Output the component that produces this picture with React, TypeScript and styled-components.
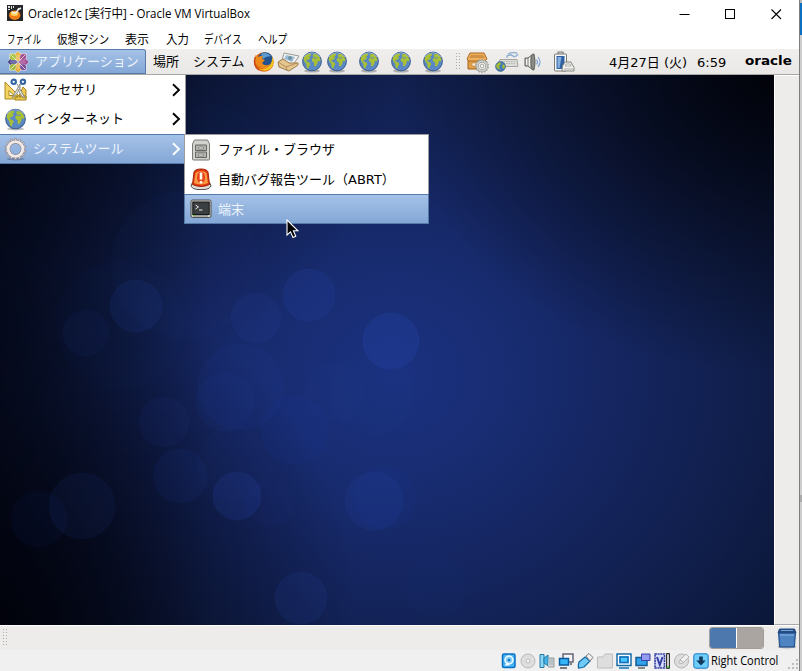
import React from "react";
import styled, { createGlobalStyle, css } from "styled-components";

const Global = createGlobalStyle`
  html, body { margin: 0; padding: 0; overflow: hidden; background: #fff; }
  * { box-sizing: border-box; }
`;

const UI_FONT = '"Open Sans", "Noto Sans CJK JP", sans-serif';
const GUEST_FONT = '"DejaVu Sans", "Noto Sans CJK JP", sans-serif';

const Screen = styled.div`
  width: 802px;
  height: 671px;
  display: flex;
  overflow: hidden;
  background: #e9e9e9;
`;
const Window = styled.div`
  width: 799px;
  height: 671px;
  display: flex;
  flex-direction: column;
  background: #f0f0f0;
`;
const Behind = styled.div`
  width: 3px;
  height: 671px;
  border-left: 1px solid #7d7d7d;
  background: linear-gradient(#b9b9b9 0 3px, #0b6fc2 3px 35px, #cdcdcd 35px 495px, #aaa 495px 502px, #cdcdcd 502px);
`;

/* Text of a known run width: the glyphs are condensed or widened to fill it */
const Label = styled.span<{ $size: number; $scale?: number; $w: number; $color?: string; $bold?: boolean; $y?: number }>`
  display: block;
  flex: none;
  width: ${(p) => p.$w}px;
  white-space: nowrap;
  font-size: ${(p) => p.$size}px;
  font-weight: ${(p) => (p.$bold ? 700 : 400)};
  color: ${(p) => p.$color || "#000"};
  line-height: 20px;
  transform: translateY(${(p) => p.$y || 0}px) scaleX(${(p) => p.$scale || 1});
  transform-origin: 0 50%;
`;

const TitleBar = styled.header`
  height: 28px;
  flex: none;
  background: #fff;
  display: flex;
  align-items: center;
  padding-left: 7px;
  font-family: ${UI_FONT};
  & > svg:first-child { margin-right: 5px; margin-top: -2px; flex: none; }
`;
const Controls = styled.div`
  display: flex;
  margin-left: auto;
`;
const Control = styled.button`
  width: 46px;
  height: 27px;
  padding: 0;
  border: 0;
  background: none;
  display: grid;
  place-items: center;
`;
const MenuBar = styled.nav`
  height: 21px;
  flex: none;
  background: #fff;
  display: flex;
  align-items: center;
  padding: 2px 0 0 7px;
  font-family: ${UI_FONT};
`;

const Panel = styled.div`
  height: 26px;
  flex: none;
  background: linear-gradient(#f0efee, #e9e8e6);
  border-bottom: 1px solid #a9a7a4;
  display: flex;
  align-items: center;
  font-family: ${GUEST_FONT};
`;
const highlight = css`
  background: linear-gradient(#a5c2e8, #84a7d6);
  border: 1px solid #5579a8;
`;
const AppsButton = styled.div`
  ${highlight}
  width: 146px;
  height: 25px;
  border-left: 0;
  border-radius: 0 3px 0 0;
  display: flex;
  align-items: center;
  padding-left: 7px;
  gap: 6px;
`;
const Spot = styled.div<{ $w: number }>`
  width: ${(p) => p.$w}px;
  flex: none;
  display: flex;
  align-items: center;
  height: 25px;
`;
const Grip = styled.div`
  width: 6px;
  height: 18px;
  flex: none;
  background-image: radial-gradient(circle at 0.5px 0.5px, #aaa 0.8px, transparent 0.9px);
  background-size: 3px 3px;
`;

const Guest = styled.main`
  height: 550px;
  flex: none;
  display: flex;
`;
const Desktop = styled.div`
  width: 774px;
  height: 550px;
  position: relative;
  overflow: hidden;
  background:
    radial-gradient(ellipse 360px 360px at 0% 100%, rgba(0, 0, 6, 0.8), rgba(0, 0, 10, 0) 100%),
    radial-gradient(ellipse 380px 300px at 100% 0%, rgba(0, 0, 4, 0.88), rgba(0, 0, 10, 0) 100%),
    radial-gradient(ellipse 400px 330px at 0% 0%, rgba(0, 0, 6, 0.55), rgba(0, 0, 10, 0) 100%),
    linear-gradient(90deg, rgba(0, 2, 12, 0.6), rgba(0, 2, 12, 0) 210px),
    radial-gradient(ellipse 530px 480px at 395px 300px, #1b3180 0%, #182d73 20%, #152662 40%, #11204f 62%, #0b1739 88%, #08112c 100%);
`;
const Wallpaper = styled.svg`
  display: block;
  width: 774px;
  height: 550px;
`;
const SideStrip = styled.div`
  width: 25px;
  background: #edecea;
  border-top: 1px solid #fff;
  border-left: 1px solid #fff;
  border-bottom: 1px solid #a8a8a8;
`;

const Menu = styled.div<{ $x: number; $y: number; $w: number }>`
  position: absolute;
  left: ${(p) => p.$x}px;
  top: ${(p) => p.$y}px;
  width: ${(p) => p.$w}px;
  background: #fff;
  border-right: 1px solid #9b9b9b;
  font-family: ${GUEST_FONT};
`;
const MainMenu = styled(Menu)`
  & > div:first-child { height: 29px; }
`;
const SubMenu = styled(Menu)`
  border: 1px solid #9b9b9b;
  border-bottom: 0;
  & > div:first-child { height: 29px; }
`;
const Item = styled.div<{ $on?: boolean; $sub?: boolean }>`
  height: 30px;
  display: flex;
  align-items: center;
  padding: 0 4px 0 ${(p) => (p.$sub ? 5 : 4)}px;
  & > svg:first-child { margin-right: 6px; flex: none; }
  & > svg:nth-child(3) { margin-left: auto; }
  ${(p) => p.$on && highlight}
  ${(p) => p.$on && (p.$sub
    ? "margin: 0 -1px; padding-left: 5px;"
    : "border-left: 0; padding-right: 3px;")}
`;
const Pointer = styled.svg`
  position: absolute;
  left: 286px;
  top: 144px;
`;

const BottomPanel = styled.div`
  height: 25px;
  flex: none;
  background: #edecea;
  border-top: 1px solid #fff;
  display: flex;
  align-items: center;
  padding: 0 2px 0 3px;
`;
const Switcher = styled.div`
  display: flex;
  width: 55px;
  height: 22px;
  margin-left: auto;
  margin-right: 13px;
  border: 1px solid #a39e9a;
  border-radius: 3px;
  overflow: hidden;
`;
const Workspace = styled.div<{ $active?: boolean }>`
  flex: 1;
  background: ${(p) => (p.$active ? "#4d78ad" : "#aaa5a1")};
  border-right: ${(p) => (p.$active ? "1px solid #fff" : "0")};
`;
const StatusBar = styled.footer`
  height: 21px;
  flex: none;
  background: #f0f0f0;
  display: flex;
  align-items: center;
  padding-left: 501px;
  gap: 3px;
  font-family: ${UI_FONT};
  & > svg { flex: none; }
  & > span { margin-left: -1px; }
  & > svg:last-child { margin-top: 7px; margin-left: -4px; }
`;

const Globe = ({ size = 22 }: { size?: number }) => (
  <svg width={size} height={size} viewBox="0 0 22 22">
    <ellipse cx="11" cy="20" rx="8" ry="1.6" fill="#000" opacity=".25" />
    <circle cx="11" cy="10.5" r="9.4" fill="#5a88c2" stroke="#3b5e90" />
    <path d="M3 6.2Q4.2 4 6 3.2L9.8 2.6 10 4.4 8.3 5.6 9 7.4 6.8 9 5.4 8.8 5.8 10.6 8.4 11.6 9.4 13.2 7.8 15.6 7.4 18 5.8 16.4 5.2 12.8 3.4 10.6 2.6 8.6z" fill="#a9bf35" />
    <path d="M12 3.2 15.4 3 18 5.4 19.6 8.8 18.6 10.6 17 9.8 16.4 12.4 14.6 15.6 13 14.8 13.2 11.6 11.2 10.6 10.8 8 12.6 6.8 11.8 5z" fill="#a9bf35" />
    <path d="M12.8 6.8l3 .3" stroke="#5a88c2" />
    <path d="M3 6Q6 1.8 11 1.7t8 4.3" fill="none" stroke="#c9dbef" opacity=".5" />
  </svg>
);

const VBoxIcon = () => (
  <svg width="16" height="17" viewBox="0 0 16 17">
    <rect width="16" height="16" fill="#26272b" />
    <path d="M1 1h2v2H1zM4 1h1v3H4zM1 4h2v1H1zM6 1h1v2H6z" fill="#dcdcdc" />
    <ellipse cx="7.7" cy="10.2" rx="5.7" ry="4.8" fill="#f07d15" />
    <ellipse cx="7.5" cy="8.8" rx="3.8" ry="2.2" fill="#ffd25a" />
    <path d="M5 6.5q1 2 3 1.5t4-5M10.5 5l3.5-2" stroke="#eee" strokeWidth="1.6" fill="none" />
  </svg>
);

const logoSquares: [number, string][] = [[0, "#a24a90"], [90, "#7b4a95"], [180, "#9fb93b"], [270, "#a6c13c"]];
const logoArrows: [number, string][] = [[0, "#e9b13a"], [90, "#9d3e8b"], [180, "#e5a62d"], [270, "#474087"]];
const CentLogo = () => (
  <svg width="22" height="22" viewBox="-11 -11 22 22">
    {logoSquares.map(([a, c]) => (
      <g key={a} transform={`rotate(${a})`}>
        <path d="M1.5-8.3H8.3V-1.5H1.5z" fill={c} stroke="#fff" strokeWidth=".5" />
        <path d="M1.5-1.5 7.5-7.5" stroke="#fff" strokeWidth=".7" />
      </g>
    ))}
    {logoArrows.map(([a, c]) => (
      <g key={a} transform={`rotate(${a})`}>
        <path d="M0-10.8 3.4-7.2 1.9-6.6V-2.2L0-.6-1.9-2.2V-6.6L-3.400-7.2z" fill={c} stroke="#fff" strokeWidth=".4" />
        <path d="M0-8V-2" stroke="#fff" strokeWidth=".5" />
      </g>
    ))}
  </svg>
);

const Firefox = () => (
  <svg width="22" height="22" viewBox="0 0 22 22">
    <circle cx="11" cy="11" r="9.8" fill="#e2620f" />
    <circle cx="12.2" cy="9" r="7.8" fill="#24528f" />
    <path d="M8 3q5-3 10 2l-5 1-3 2z" fill="#5b9bd0" />
    <path d="M2.5 4l3 2q2-1.500 4.500-.5L9 8l3 1-3 3q3 4 8 1-3 6-9 4Q1 14 2 7z" fill="#ee8a1b" />
    <path d="M19 5q4 8-2 13-6 4-12-1 7 3 11-2 4-4 3-10z" fill="#f7c21e" />
    <path d="M2.4 6Q-.5 15 6 19" stroke="#c94716" strokeWidth="1.4" fill="none" />
  </svg>
);

const Mail = () => (
  <svg width="23" height="22" viewBox="0 0 23 22">
    <path d="M7 2 22 5 16 14 5 9z" fill="#f2f3f0" stroke="#999b94" />
    <path d="M9 4l9 2-3 5-8-3z" fill="#9dbcd6" /><circle cx="13" cy="7" r="2" fill="#6c92a0" />
    <path d="M1 11 6 8l6 4 9 0v2l-9 6-10-4z" fill="#e4c690" stroke="#a07c46" />
    <path d="M1 11l8 5 11-4M9 16l1 3" fill="none" stroke="#b58e56" />
  </svg>
);

const gearTeeth = Array.from({ length: 14 }, (_, i) => (i * 360) / 14);
const Gear = ({ r = 11, fill = "#f1e8e8", stroke = "#8b8387" }: { r?: number; fill?: string; stroke?: string }) => (
  <g>
    {gearTeeth.map((a) => (
      <path key={a} transform={`rotate(${a})`} d={`M${-r * 0.12} ${-r * 0.72}L${-r * 0.08} ${-r * 0.96}H${r * 0.08}L${r * 0.12} ${-r * 0.72}`} fill={fill} stroke={stroke} strokeWidth={r * 0.07} />
    ))}
    <circle r={r * 0.66} fill="none" stroke={stroke} strokeWidth={r * 0.36} />
    <circle r={r * 0.67} fill="none" stroke={fill} strokeWidth={r * 0.27} />
  </g>
);

const Package = () => (
  <svg width="24" height="22" viewBox="0 0 24 22">
    <path d="M2 9v9h17V9z" fill="#e2a04a" stroke="#a4621a" />
    <path d="M4 2h14l3 6-2 2H3L1 8z" fill="#eeb162" stroke="#aa691f" />
    <path d="M5 4h12l2 3H3z" fill="#d39143" /><path d="M6 12h8v3H6z" fill="#fdf1dc" stroke="#ba7d31" strokeWidth=".6" />
    <g transform="translate(16 15)"><circle r="5" fill="#eee" /><Gear r={7} fill="#cfd0cb" stroke="#888a84" /><circle r="1.8" fill="#f7f7f5" stroke="#888a84" strokeWidth=".7" /></g>
  </svg>
);

const KeyboardNet = () => (
  <svg width="24" height="22" viewBox="0 0 24 22">
    <path d="M12 7V5q4-2 6 0t5-2M13 3q4-2 9-1" fill="none" stroke="#8baed2" strokeWidth="1.3" />
    <path d="M5 8.500h17l1 7H2z" fill="#dcddd9" stroke="#a4a69f" />
    <path d="M6 10.500h15M6 12.500h15" stroke="#b4b6af" strokeDasharray="1.5 1" />
    <circle cx="5.500" cy="15.500" r="4.800" fill="#477bb5" stroke="#436895" />
    <path d="m2 13 3-2 1 2-2 2 1 4-3-2-1-2zm6 0 2 2-1 3-2-2z" fill="#a5bd2d" />
  </svg>
);

const Speaker = () => (
  <svg width="22" height="22" viewBox="0 0 22 22">
    <path d="M2 7h3l5-4h1v16h-1l-5-4H2z" fill="#b5b5b1" stroke="#5e605b" />
    <path d="M3.500 8v6M6.500 6.500v9" stroke="#f3f3f3" />
    <ellipse cx="10" cy="11" rx="2" ry="7.800" fill="#8a8b87" stroke="#656661" />
    <path d="M13.500 8.500q2 2.500 0 5M15 6q4 5 0 10" fill="none" stroke="#7fa3d0" strokeWidth="1.200" />
  </svg>
);

const Battery = () => (
  <svg width="22" height="22" viewBox="0 0 22 22">
    <rect x="5" y="1" width="5" height="3" fill="#ddd" stroke="#777" />
    <rect x="1.500" y="3" width="12" height="17" rx="1" fill="#f8f8f8" stroke="#777973" />
    <path d="M3.500 5h8v13h-8z" fill="#2d60a5" /><path d="M4.500 6h4l-2 11h-2z" fill="#86afdd" />
    <path d="M9.500 15l2.500-4h6l2 4 1 1v4h-12z" fill="#f1f1ee" stroke="#85877f" />
    <path d="M12 15l1-2h4l1 2zM11 18h9" fill="#fff" stroke="#999" strokeWidth=".8" />
  </svg>
);

const Tools = () => (
  <svg width="23" height="24" viewBox="0 0 23 24">
    <path d="M1 4v17h17z" fill="#f1d464" stroke="#af871a" /><path d="M5 12.500v5h5z" fill="#fff" stroke="#af871a" />
    <path d="M15 18l4-9 3 3v9h-7z" fill="#e9c94f" stroke="#aa831d" />
    <path d="M11 18h11v4H11z" fill="#e9c94f" stroke="#aa831d" /><path d="M13 18v2m3-2v2m3-2v2" stroke="#8a6c22" />
    <path d="M13 6l8 14q-4-1-7-9M16 6 8 20q5-3 8-10z" fill="#eeeeec" stroke="#888a85" />
    <circle cx="9.700" cy="3.800" r="2.200" fill="#fff" stroke="#3465a4" strokeWidth="2.100" />
    <circle cx="18.900" cy="3.800" r="2.200" fill="#fff" stroke="#3465a4" strokeWidth="2.100" />
  </svg>
);

const Settings = () => (
  <svg width="23" height="24" viewBox="-11.5 -12 23 24">
    <ellipse cy="10" rx="9" ry="1.500" fill="#203655" opacity=".3" /><Gear r={11} />
  </svg>
);

const Chevron = ({ light }: { light?: boolean }) => (
  <svg width="10" height="16" viewBox="0 0 10 16">
    <path d="M2 2.200 8 8 2 13.800" fill="none" stroke={light ? "#fff" : "#000"} strokeWidth="1.900" />
  </svg>
);

const Cabinet = () => (
  <svg width="22" height="22" viewBox="0 0 22 22">
    <path d="M4.500 1h13l2 4v15q0 1-1 1h-15q-1 0-1-1V5z" fill="#d2d2cf" stroke="#777973" />
    <path d="M5.500 6h11v5.500h-11zM5.500 13h11v5.500h-11z" fill="#b4b4b0" stroke="#656761" />
    <path d="M8.500 8h5v2h-5zM8.500 15h5v2h-5z" fill="#ddd" stroke="#777" strokeWidth=".7" />
  </svg>
);

const Alarm = () => (
  <svg width="22" height="23" viewBox="0 0 22 23">
    <path d="M1 18q0-3 3-4h14q3 1 3 4-1 3-6 3.500H7Q2 21 1 18z" fill="#dededb" stroke="#555" />
    <path d="M2.500 16.500 4 4q1-3 7-3t7 3l1.500 12.500q-8.500 4-17 0z" fill="#e2370f" stroke="#a42505" />
    <path d="M4 15 5.500 5q5.500-4 11 0L18 15q-7 3-14 0z" fill="#f79a42" />
    <ellipse cx="11" cy="9.500" rx="4" ry="6" fill="#e8431a" />
    <path d="M11 4.500v7" stroke="#fffbe6" strokeWidth="2.600" /><circle cx="11" cy="14.200" r="1.500" fill="#fffbe6" />
  </svg>
);

const Terminal = () => (
  <svg width="22" height="20" viewBox="0 0 22 20">
    <rect x="1" y="1" width="20" height="17.500" rx="1.500" fill="#cfcfcb" stroke="#4e4f4a" />
    <rect x="2.800" y="3" width="16.400" height="12.500" fill="#3b3f40" stroke="#151719" />
    <path d="m5.500 6 3 2-3 2M9 11h3.500" fill="none" stroke="#fff" strokeWidth=".9" />
    <path d="M3 16.900h15" stroke="#777" /><path d="M3 16.500h2" stroke="#67c437" />
  </svg>
);

const Trash = () => (
  <svg width="20" height="22" viewBox="0 0 20 22">
    <ellipse cx="10" cy="20" rx="9.500" ry="1.500" fill="#777" opacity=".5" />
    <path d="M1.500 5 2.500 20h15l1-15z" fill="#4279b9" stroke="#204a87" />
    <path d="M2.500 2h15l1.500 4H1z" fill="#284e80" stroke="#204a87" /><path d="M4 3h12v1H4z" fill="#73a2da" />
    <path d="m3 7 1 12h12l1-12" fill="#4f84c3" /><path d="M3 7h14v2H3z" fill="#6c9cd4" />
  </svg>
);

const bokeh = [
  [136, 231, 26, 0.1], [86, 258, 23, 0.06], [309, 220, 26, 0.12], [256, 243, 25, 0.08],
  [391, 266, 28, 0.16], [241, 312, 43, 0.06], [225, 327, 29, 0.06], [164, 347, 25, 0.06],
  [295, 355, 34, 0.05], [180, 401, 27, 0.07], [237, 421, 24, 0.14], [270, 428, 24, 0.04],
  [374, 426, 29, 0.1], [385, 423, 31, 0.05], [82, 431, 33, 0.08], [39, 444, 28, 0.05],
  [301, 523, 26, 0.1], [436, 511, 31, 0.025], [334, 318, 30, 0.03], [372, 318, 43, 0.02],
  [185, 190, 74, 0.03], [120, 250, 64, 0.02], [235, 388, 38, 0.03], [210, 92, 64, 0.02],
] as const;

const StatusIcons = () => (
  <>
    <svg width="16" height="16" viewBox="0 0 16 16"><rect x="1.500" y="1" width="12.500" height="13.500" rx="1.500" fill="#49b4f3" stroke="#0a70c4" strokeWidth="1.500" /><circle cx="8" cy="7" r="4" fill="#8bd0f7" stroke="#f2ffff" strokeWidth="1.500" /><circle cx="8" cy="7" r="1.500" fill="#187ecb" /><path d="m6.500 9-3 3.500h5z" fill="#fff" /></svg>
    <svg width="16" height="16" viewBox="0 0 16 16"><circle cx="8" cy="8" r="7" fill="#dedede" stroke="#b8b8b8" /><circle cx="8" cy="8" r="2" fill="#f5f5f5" stroke="#bbb" /></svg>
    <svg width="16" height="16" viewBox="0 0 16 16"><path d="M1 1.500h4v13H1z" fill="#8bd7f7" stroke="#237ba2" /><path d="M5 5l4-3v11l-4-3z" fill="#45b4ec" stroke="#237ba2" /><path d="M10 5h5v9H9" fill="#d6d8d8" stroke="#8d9799" /><path d="M10 7h4M10 9h4m-4 2h4" stroke="#8aa0a7" strokeWidth=".8" /></svg>
    <svg width="16" height="16" viewBox="0 0 16 16"><path d="M5 1h10v8H5z" fill="#f5f5f5" stroke="#667" strokeWidth="1.500" /><path d="M1.500 5.500h9v6.500h-9z" fill="#35b5f8" stroke="#085b9d" strokeWidth="1.500" /><path d="M2 15h7m4-5v2" stroke="#555" strokeWidth="1.500" /></svg>
    <svg width="17" height="16" viewBox="0 0 17 16"><path d="m2 9 6-5 5 4-6 6q-3 1-5.500 1Q1 12 2 9z" fill="#6fcbfa" stroke="#176ca6" strokeWidth="1.300" /><path d="m9 3 3-2.500 4 4L13 8z" fill="#f2f2f2" stroke="#777" /></svg>
    <svg width="16" height="16" viewBox="0 0 16 16"><path d="M.5 4H6l2-3h7.500v14H.5z" fill="#dedede" stroke="#bdbdbd" /></svg>
    <svg width="16" height="16" viewBox="0 0 16 16"><rect x="1" y="1" width="14" height="11.500" fill="#fff" stroke="#176ca8" strokeWidth="1.500" /><rect x="4" y="4" width="8" height="5.500" fill="#48c8fc" stroke="#1576c5" strokeWidth="1.800" /><path d="M3 15h10" stroke="#1576b5" strokeWidth="1.500" /></svg>
    <svg width="16" height="16" viewBox="0 0 16 16"><path d="M1 4.500h11v8H1z" fill="#31a1ea" stroke="#145d98" strokeWidth="1.500" /><path d="M6.500 1h8.500v6.500H6.500z" fill="#929cf0" stroke="#3a3fac" /><path d="M3 15h7" stroke="#666" strokeWidth="1.500" /></svg>
    <svg width="16" height="16" viewBox="0 0 16 16"><rect x="1" y="1" width="9.500" height="14" fill="#d8dcfb" stroke="#3540a0" strokeWidth="1.600" strokeDasharray="2 .6" /><path d="m3 4 2.800 8L8.500 4" fill="none" stroke="#3540a0" strokeWidth="2" /><rect x="12.700" y=".7" width="2.600" height="14.500" fill="#fff" stroke="#000" /><path d="M13.500 14h2" stroke="#0c0" /></svg>
    <svg width="17" height="16" viewBox="0 0 17 16"><circle cx="8.500" cy="8" r="7" fill="#dddddd" stroke="#b4b4b4" /><path d="M7 7l6-6 3 3-6 6q-2 1-4 0-1-1 1-3z" fill="#eee" stroke="#b4b4b4" /><path d="m7 7 3 2" stroke="#aaa" /></svg>
    <svg width="16" height="16" viewBox="0 0 16 16"><rect x=".8" y=".8" width="14.400" height="14.400" rx="2" fill="#6fcdfb" stroke="#1778c0" /><path d="M6.200 3.500h3.600v4h3l-4.800 5-4.800-5h3z" fill="#123a5c" /></svg>
  </>
);

export default function App() {
  return (
    <>
      <Global />
      <Screen>
        <Window>
          <TitleBar>
            <VBoxIcon />
            <Label $size={12} $w={230} $scale={0.96}>Oracle12c [実行中] - Oracle VM VirtualBox</Label>
            <Controls>
              <Control><svg width="11" height="11"><path d="M.5 5.500h10" stroke="#000" /></svg></Control>
              <Control><svg width="11" height="11"><rect x=".5" y=".5" width="9" height="9" fill="none" stroke="#000" /></svg></Control>
              <Control><svg width="11" height="11"><path d="M.5.5l9.500 9.500m0-9.500-9.500 9.500" stroke="#000" strokeWidth="1.100" /></svg></Control>
            </Controls>
          </TitleBar>
          <MenuBar>
            <Label $size={12} $w={50} $scale={0.71}>ファイル</Label>
            <Label $size={12} $w={68} $scale={0.87}>仮想マシン</Label>
            <Label $size={12} $w={41}>表示</Label>
            <Label $size={12} $w={38} $scale={0.95}>入力</Label>
            <Label $size={12} $w={54} $scale={0.79}>デバイス</Label>
            <Label $size={12} $w={40} $scale={0.81}>ヘルプ</Label>
          </MenuBar>
          <Panel>
            <AppsButton><CentLogo /><Label $size={13} $w={104} $color="#eef4fc">アプリケーション</Label></AppsButton>
            <Spot $w={107}><Spot $w={7} /><Label $size={13} $w={40}>場所</Label><Label $size={13} $w={52}>システム</Label></Spot>
            <Spot $w={24}><Firefox /></Spot>
            <Spot $w={24}><Mail /></Spot>
            <Spot $w={25}><Globe /></Spot>
            <Spot $w={32}><Globe /></Spot>
            <Spot $w={32}><Globe /></Spot>
            <Spot $w={32}><Globe /></Spot>
            <Spot $w={34}><Globe /></Spot>
            <Spot $w={10}><Grip /></Spot>
            <Spot $w={29}><Package /></Spot>
            <Spot $w={28}><KeyboardNet /></Spot>
            <Spot $w={30}><Speaker /></Spot>
            <Spot $w={56}><Battery /></Spot>
            <Label $size={13} $w={88} $y={0.5}>4月27日 (火)</Label>
            <Label $size={13} $w={48} $scale={1} $y={0.5}>6:59</Label>
            <Label $size={13} $w={50} $bold $y={-1} $scale={1.04}>oracle</Label>
          </Panel>
          <Guest>
            <Desktop>
              <Wallpaper viewBox="0 0 774 550">
                {bokeh.map(([x, y, r, o]) => (
                  <circle key={`${x}-${y}`} cx={x} cy={y} r={r} fill="#3156cf" fillOpacity={o} stroke="#466ae0" strokeOpacity={o * 0.45} />
                ))}
              </Wallpaper>
              <MainMenu $x={0} $y={0} $w={186}>
                <Item><Tools /><Label $size={13} $w={80}>アクセサリ</Label><Chevron /></Item>
                <Item><Globe size={23} /><Label $size={13} $w={100}>インターネット</Label><Chevron /></Item>
                <Item $on><Settings /><Label $size={13} $w={100} $color="#eef4fc">システムツール</Label><Chevron light /></Item>
              </MainMenu>
              <SubMenu $x={184} $y={59} $w={245}>
                <Item $sub><Cabinet /><Label $size={13} $w={130}>ファイル・ブラウザ</Label></Item>
                <Item $sub><Alarm /><Label $size={13} $w={180} $y={1}>自動バグ報告ツール（ABRT）</Label></Item>
                <Item $on $sub><Terminal /><Label $size={13} $w={60} $y={1} $color="#eef4fc">端末</Label></Item>
              </SubMenu>
              <Pointer width="13" height="20" viewBox="0 0 13 20">
                <path d="M1 1v15l3.500-3.200L7 18.500l2.800-1.200-2.400-5.500H12z" fill="#000" stroke="#fff" strokeWidth="1.100" />
              </Pointer>
            </Desktop>
            <SideStrip />
          </Guest>
          <BottomPanel>
            <Grip />
            <Switcher><Workspace $active /><Workspace /></Switcher>
            <Trash />
          </BottomPanel>
          <StatusBar>
            <StatusIcons />
            <Label $size={12} $w={78} $scale={0.92}>Right Control</Label>
            <svg width="10" height="12" viewBox="0 0 10 12"><path d="M8 1h2v2H8zM4 5h2v2H4zM8 5h2v2H8zM0 9h2v2H0zM4 9h2v2H4zM8 9h2v2H8z" fill="#bebebe" /></svg>
          </StatusBar>
        </Window>
        <Behind />
      </Screen>
    </>
  );
}
